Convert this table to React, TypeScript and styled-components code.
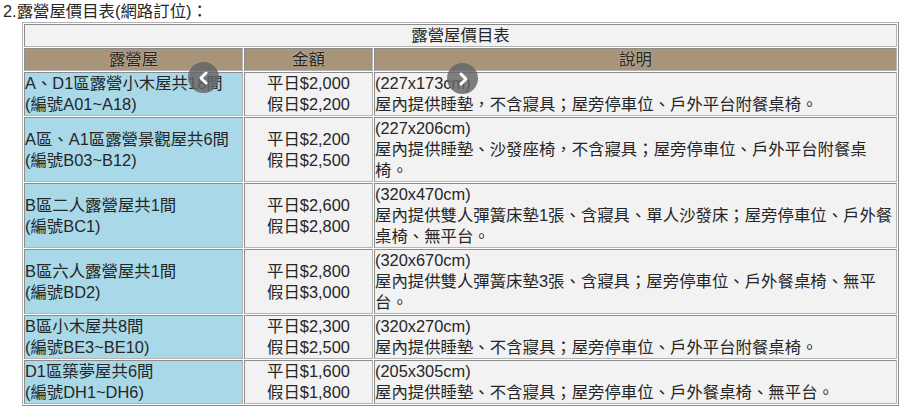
import React from 'react'
import styled, { createGlobalStyle } from 'styled-components'

const GlobalStyle = createGlobalStyle`
  body {
    margin: 0;
    background: #fff;
    font-family: 'Liberation Sans', 'Noto Sans CJK TC', sans-serif;
    color: #262626;
  }
`

const Page = styled.div`
  padding: 1px 0 0 3px;
`

const Heading = styled.div`
  font-size: 16.4px;
  line-height: 20px;
  margin-bottom: 1px;
`

const TableWrap = styled.div`
  position: relative;
  margin-left: 19px;
  width: 877px;
`

const PriceTable = styled.table`
  width: 877px;
  table-layout: fixed;
  border-collapse: separate;
  border-spacing: 1px;
  border: 1px solid;
  border-color: #b4b4b4 #8c8c8c #8c8c8c #b4b4b4;
  background: #fff;
  font-size: 16.4px;
  line-height: 21px;
`

const Cell = styled.td<{ $tone?: 'name' | 'plain'; $align?: 'left' | 'center' }>`
  padding: 0;
  border: 1px solid;
  border-color: #8c8c8c #b4b4b4 #b4b4b4 #8c8c8c;
  vertical-align: middle;
  text-align: ${(p) => p.$align ?? 'left'};
  background: ${(p) => (p.$tone === 'name' ? '#a9d8e8' : '#f2f2f2')};
  color: #262626;
`

const TitleCell = styled(Cell)`
  text-align: center;
`

const HeadCell = styled.th`
  padding: 0;
  border: 1px solid;
  border-color: #8c8c8c #b4b4b4 #b4b4b4 #8c8c8c;
  background: #a89479;
  font-weight: normal;
  text-align: center;
  color: #262626;
  text-shadow: 0 0 2px rgba(255, 255, 255, 0.5);
`

const Arrow = styled.button<{ $x: number; $y: number }>`
  position: absolute;
  left: ${(p) => p.$x}px;
  top: ${(p) => p.$y}px;
  width: 31px;
  height: 31px;
  border-radius: 50%;
  border: none;
  padding: 0;
  background: rgba(100, 100, 100, 0.82);
  display: flex;
  align-items: center;
  justify-content: center;
  cursor: pointer;
`

type Row = { name: string; code: string; weekday: string; holiday: string; size: string; desc: string }

const rows: Row[] = [
  { name: 'A、D1區露營小木屋共18間', code: '(編號A01~A18)', weekday: '平日$2,000', holiday: '假日$2,200', size: '(227x173cm)', desc: '屋內提供睡墊，不含寢具；屋旁停車位、戶外平台附餐桌椅。' },
  { name: 'A區、A1區露營景觀屋共6間', code: '(編號B03~B12)', weekday: '平日$2,200', holiday: '假日$2,500', size: '(227x206cm)', desc: '屋內提供睡墊、沙發座椅，不含寢具；屋旁停車位、戶外平台附餐桌椅。' },
  { name: 'B區二人露營屋共1間', code: '(編號BC1)', weekday: '平日$2,600', holiday: '假日$2,800', size: '(320x470cm)', desc: '屋內提供雙人彈簧床墊1張、含寢具、單人沙發床；屋旁停車位、戶外餐桌椅、無平台。' },
  { name: 'B區六人露營屋共1間', code: '(編號BD2)', weekday: '平日$2,800', holiday: '假日$3,000', size: '(320x670cm)', desc: '屋內提供雙人彈簧床墊3張、含寢具；屋旁停車位、戶外餐桌椅、無平台。' },
  { name: 'B區小木屋共8間', code: '(編號BE3~BE10)', weekday: '平日$2,300', holiday: '假日$2,500', size: '(320x270cm)', desc: '屋內提供睡墊、不含寢具；屋旁停車位、戶外平台附餐桌椅。' },
  { name: 'D1區築夢屋共6間', code: '(編號DH1~DH6)', weekday: '平日$1,600', holiday: '假日$1,800', size: '(205x305cm)', desc: '屋內提供睡墊、不含寢具；屋旁停車位、戶外餐桌椅、無平台。' },
]

const Chevron = ({ dir }: { dir: 'left' | 'right' }) => (
  <svg width="14" height="14" viewBox="0 0 14 14">
    <path
      d={dir === 'left' ? 'M9 2 L4 7 L9 12' : 'M5 2 L10 7 L5 12'}
      fill="none"
      stroke="#fff"
      strokeWidth="3"
      strokeLinecap="round"
      strokeLinejoin="round"
    />
  </svg>
)

export default function App() {
  return (
    <>
      <GlobalStyle />
      <Page>
        <Heading>2.露營屋價目表(網路訂位)：</Heading>
        <TableWrap>
          <PriceTable>
            <colgroup>
              <col style={{ width: 219 }} />
              <col style={{ width: 129 }} />
              <col />
            </colgroup>
            <tbody>
              <tr>
                <TitleCell colSpan={3}>露營屋價目表</TitleCell>
              </tr>
              <tr>
                <HeadCell>露營屋</HeadCell>
                <HeadCell>金額</HeadCell>
                <HeadCell>說明</HeadCell>
              </tr>
              {rows.map((r) => (
                <tr key={r.code}>
                  <Cell $tone="name">
                    {r.name}
                    <br />
                    {r.code}
                  </Cell>
                  <Cell $align="center">
                    {r.weekday}
                    <br />
                    {r.holiday}
                  </Cell>
                  <Cell>
                    {r.size}
                    <br />
                    {r.desc}
                  </Cell>
                </tr>
              ))}
            </tbody>
          </PriceTable>
          <Arrow $x={166} $y={40} aria-label="previous">
            <Chevron dir="left" />
          </Arrow>
          <Arrow $x={425} $y={41} aria-label="next">
            <Chevron dir="right" />
          </Arrow>
        </TableWrap>
      </Page>
    </>
  )
}
